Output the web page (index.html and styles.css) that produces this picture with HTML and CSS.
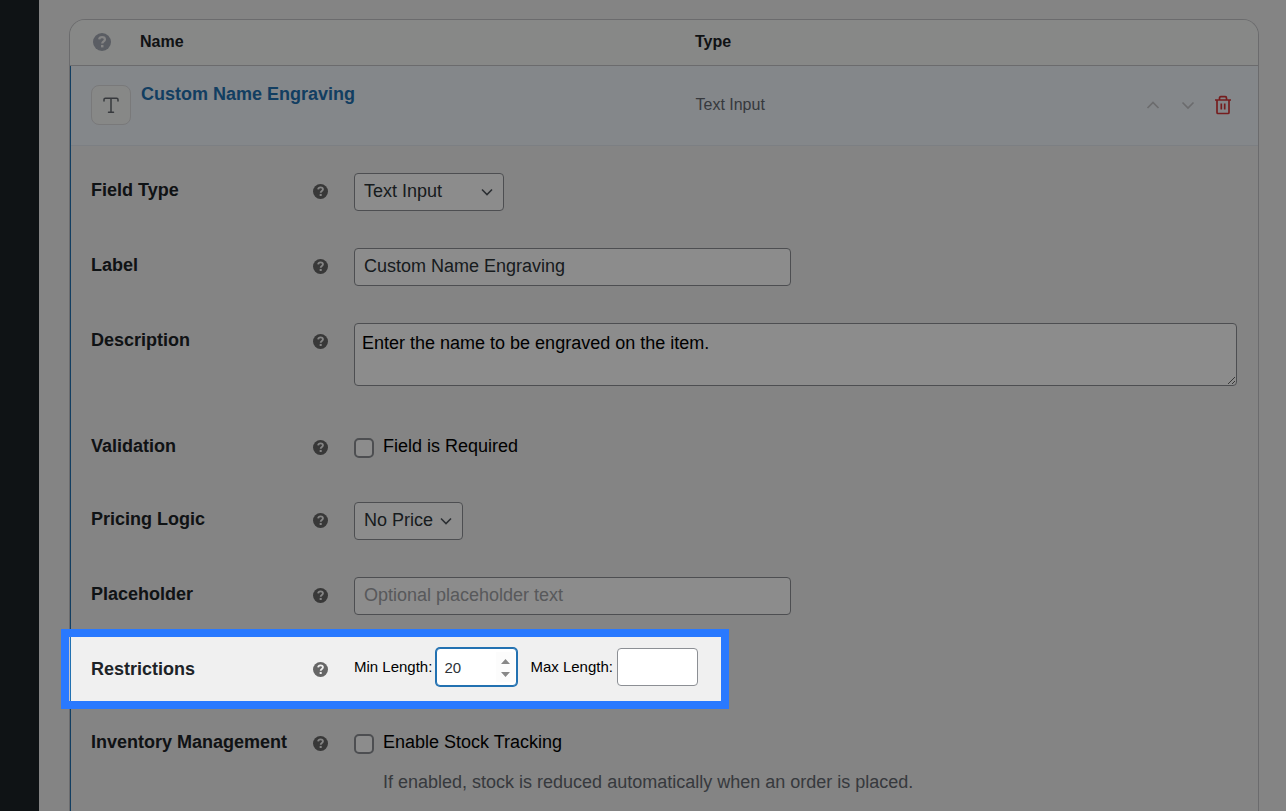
FILE: index.html
```
<!DOCTYPE html>
<html lang="en">

<head>
    <meta charset="utf-8">
    <title>Product Fields</title>
    <link rel="stylesheet" href="styles.css">
</head>

<body>
    <!-- shared icons -->
    <svg class="symbols" aria-hidden="true">
        <symbol id="help" viewBox="0 0 16 16">
            <circle cx="8" cy="8" r="8" fill="currentColor" />
            <path d="M5.500 5.700C5.700 4.300 6.700 3.600 8 3.600c1.500 0 2.600.8 2.600 2.100 0 1.800-2.400 1.700-2.400 3.700" fill="none" stroke="#f0f0f0" stroke-width="2" />
            <rect x="7.100" y="10.600" width="2.200" height="2.200" fill="#f0f0f0" />
        </symbol>
    </svg>

    <aside class="sidebar"></aside>

    <main class="content">
        <section class="card">
            <header class="card-head columns">
                <svg class="head-help"><use href="#help" /></svg>
                <span>Name</span>
                <span>Type</span>
            </header>

            <div class="card-body">
                <div class="item columns">
                    <span class="item-icon">
                        <svg width="18" height="18" viewBox="0 0 18 18" fill="none" stroke="currentColor" stroke-width="1.500" stroke-linecap="round" stroke-linejoin="round">
                            <path d="M2 5V3.600Q2 2.200 3.400 2.200h11.200Q16 2.200 16 3.600V5M9 2.200v14M6.500 16.200h5" />
                        </svg>
                    </span>
                    <a class="item-name" href="#fields">Custom Name Engraving</a>
                    <div class="item-type">
                        <span>Text Input</span>
                        <div class="actions">
                            <button type="button" class="move" aria-label="Move up">
                                <svg width="14" height="14" viewBox="0 0 14 14"><path d="M1.500 10 7 4.500l5.500 5.500" /></svg>
                            </button>
                            <button type="button" class="move" aria-label="Move down">
                                <svg width="14" height="14" viewBox="0 0 14 14"><path d="M1.500 4.500 7 10l5.500-5.500" /></svg>
                            </button>
                            <button type="button" class="delete" aria-label="Delete">
                                <svg width="18" height="20" viewBox="0 0 18 20"><path d="M1 5h16M3 5v12.500q0 1 1 1h10q1 0 1-1V5M5.500 5V3q0-1.300 1.300-1.300h4.400q1.300 0 1.300 1.300v2M7.300 8.500v6M10.700 8.500v6" /></svg>
                            </button>
                        </div>
                    </div>
                </div>

                <form class="fields" id="fields">
                    <div class="field">
                        <label class="field-label" for="type">Field Type</label>
                        <svg class="help"><use href="#help" /></svg>
                        <span class="select select-type">
                            <select id="type"><option>Text Input</option></select>
                            <svg viewBox="0 0 12 12"><path d="M1 3.500 6 8.500l5-5" /></svg>
                        </span>
                    </div>

                    <div class="field">
                        <label class="field-label" for="label">Label</label>
                        <svg class="help"><use href="#help" /></svg>
                        <input class="text" type="text" id="label" value="Custom Name Engraving">
                    </div>

                    <div class="field field-description">
                        <label class="field-label" for="description">Description</label>
                        <svg class="help"><use href="#help" /></svg>
                        <textarea id="description">Enter the name to be engraved on the item.</textarea>
                    </div>

                    <div class="field">
                        <span class="field-label">Validation</span>
                        <svg class="help"><use href="#help" /></svg>
                        <label class="check"><input type="checkbox">Field is Required</label>
                    </div>

                    <div class="field">
                        <label class="field-label" for="pricing">Pricing Logic</label>
                        <svg class="help"><use href="#help" /></svg>
                        <span class="select select-pricing">
                            <select id="pricing"><option>No Price</option></select>
                            <svg viewBox="0 0 12 12"><path d="M1 3.500 6 8.500l5-5" /></svg>
                        </span>
                    </div>

                    <div class="field">
                        <label class="field-label" for="placeholder">Placeholder</label>
                        <svg class="help"><use href="#help" /></svg>
                        <input class="text" type="text" id="placeholder" placeholder="Optional placeholder text">
                    </div>

                    <div class="field field-restrictions">
                        <span class="field-label">Restrictions</span>
                        <svg class="help"><use href="#help" /></svg>
                        <div class="lengths">
                            <label for="min">Min Length:</label>
                            <input class="number active" type="number" id="min" value="20">
                            <label for="max">Max Length:</label>
                            <input class="number" type="number" id="max">
                        </div>
                        <div class="spotlight"></div>
                    </div>

                    <div class="field">
                        <span class="field-label">Inventory Management</span>
                        <svg class="help"><use href="#help" /></svg>
                        <div>
                            <label class="check"><input type="checkbox">Enable Stock Tracking</label>
                            <p class="note">If enabled, stock is reduced automatically when an order is placed.</p>
                        </div>
                    </div>
                </form>
            </div>
        </section>
    </main>
</body>

</html>
```

FILE: styles.css
```
* {
    box-sizing: border-box;
}

body {
    display: flex;
    min-height: 100vh;
    margin: 0;
    background: #f0f0f0;
    color: #000;
    font: 18px/24px "Liberation Sans", Arial, sans-serif;
}

input,
select,
textarea {
    margin: 0;
    border: 1px solid #8c8f94;
    border-radius: 4px;
    background: #fff;
    color: #2c3338;
    font: inherit;
}

.symbols {
    position: absolute;
    width: 0;
    height: 0;
}

/* layout */
.sidebar {
    flex: none;
    width: 39px;
    background: #1d2327;
}

.content {
    display: flex;
    flex: 1;
    min-width: 0;
    padding: 19px 27px 0 30px;
}

.card {
    display: flex;
    flex: 1;
    flex-direction: column;
    min-width: 0;
    border: 1px solid #c3c4c7;
    border-bottom: 0;
    border-radius: 16px 16px 0 0;
}

.columns {
    display: grid;
    grid-template-columns: 50px minmax(0, 555fr) minmax(0, 542fr);
    padding: 0 21px 1px 20px;
}

.card-head {
    align-items: center;
    height: 46px;
    border-bottom: 1px solid #c3c4c7;
    border-radius: 15px 15px 0 0;
    background: #f6f8f6;
    color: #1d2327;
    font-size: 16px;
    font-weight: bold;
}

.head-help {
    width: 18px;
    height: 18px;
    margin-left: 3px;
    color: #a4a9b5;
}

.card-body {
    flex: 1;
    border-left: 1px solid #2271b1;
}

/* selected item */
.item {
    align-items: center;
    height: 80px;
    border-bottom: 1px solid #e2e8ee;
    background: #f0f6fc;
}

.item-icon {
    display: grid;
    place-items: center;
    width: 40px;
    height: 40px;
    border: 1px solid #dcdcde;
    border-radius: 8px;
    background: #f6f8f6;
    color: #646970;
}

.item-name {
    align-self: start;
    padding-top: 16px;
    color: #2271b1;
    font-weight: bold;
    text-decoration: none;
}

.item-type {
    display: flex;
    align-items: center;
    justify-content: space-between;
    color: #646970;
    font-size: 16px;
}

.actions {
    display: flex;
    gap: 7px;
}

.actions button {
    display: grid;
    place-items: center;
    width: 28px;
    height: 28px;
    padding: 0;
    border: 0;
    background: none;
}

.actions path {
    fill: none;
    stroke: currentColor;
    stroke-width: 1.7;
}

.actions .move {
    color: #c3c4c7;
}

.actions .delete {
    color: #d63638;
}

/* settings */
.fields {
    display: flex;
    flex-direction: column;
    gap: 37px;
    padding: 27px 21px 0 20px;
}

.field {
    display: grid;
    grid-template-columns: 222px 41px minmax(0, 1fr);
    align-items: start;
}

.field-label {
    padding-bottom: 2px;
    color: #1d2327;
    font-weight: bold;
    line-height: 34px;
}

.help {
    width: 15px;
    height: 15px;
    margin-top: 11px;
    color: #666;
}

.text {
    width: 100%;
    max-width: 437px;
    height: 38px;
    padding: 0 9px 2px;
}

.text::placeholder {
    color: #a0a2a6;
}

.select {
    display: grid;
    align-items: center;
}

.select-type {
    width: 150px;
}

.select-pricing {
    width: 109px;
}

.select select,
.select svg {
    grid-area: 1 / 1;
}

.select select {
    width: 100%;
    height: 38px;
    padding: 0 9px 2px;
    appearance: none;
}

.select svg {
    justify-self: end;
    width: 12px;
    height: 12px;
    margin-right: 11px;
    fill: none;
    stroke: #50575e;
    stroke-width: 1.6;
    pointer-events: none;
}

textarea {
    display: block;
    width: 100%;
    height: 63px;
    padding: 7px;
    color: #000;
    resize: vertical;
}

.field-description {
    padding-bottom: 6px;
}

.check {
    display: flex;
    align-items: center;
    gap: 9px;
    line-height: 34px;
}

.check input {
    width: 20px;
    height: 20px;
    margin-top: 4px;
    border-width: 2px;
    border-radius: 5px;
    appearance: none;
}

.note {
    margin: 11px 0 0 29px;
    color: #646970;
}

/* length limits */
.field-restrictions {
    position: relative;
    margin-top: -4px;
}

.field-restrictions .field-label {
    padding-top: 4px;
}

.field-restrictions .help {
    margin-top: 14px;
}

.lengths {
    display: flex;
    align-items: center;
    gap: 4px;
    font-size: 15px;
}

.number {
    width: 81px;
    height: 38px;
    margin-right: 9px;
    padding: 0 1px 0 7px;
}

.number.active {
    border-color: #2271b1;
    box-shadow: 0 0 0 1px #2271b1;
}

.number.active::-webkit-inner-spin-button {
    width: 19px;
    height: 30px;
    background: #fcfcfc url("data:image/svg+xml,%3Csvg xmlns='http://www.w3.org/2000/svg' viewBox='0 0 19 30'%3E%3Cpath d='M5 12l4.500-5 4.500 5zM5 20l4.500 5 4.500-5z' fill='%23888'/%3E%3C/svg%3E");
    opacity: 1;
    appearance: none;
}

/* dims the rest of the screen around the frame */
.spotlight {
    position: absolute;
    top: -19px;
    left: -30px;
    width: 668px;
    height: 80px;
    border: 8px solid #2979ff;
    box-shadow: 0 0 0 9999px rgba(0, 0, 0, .45);
    pointer-events: none;
}
```
